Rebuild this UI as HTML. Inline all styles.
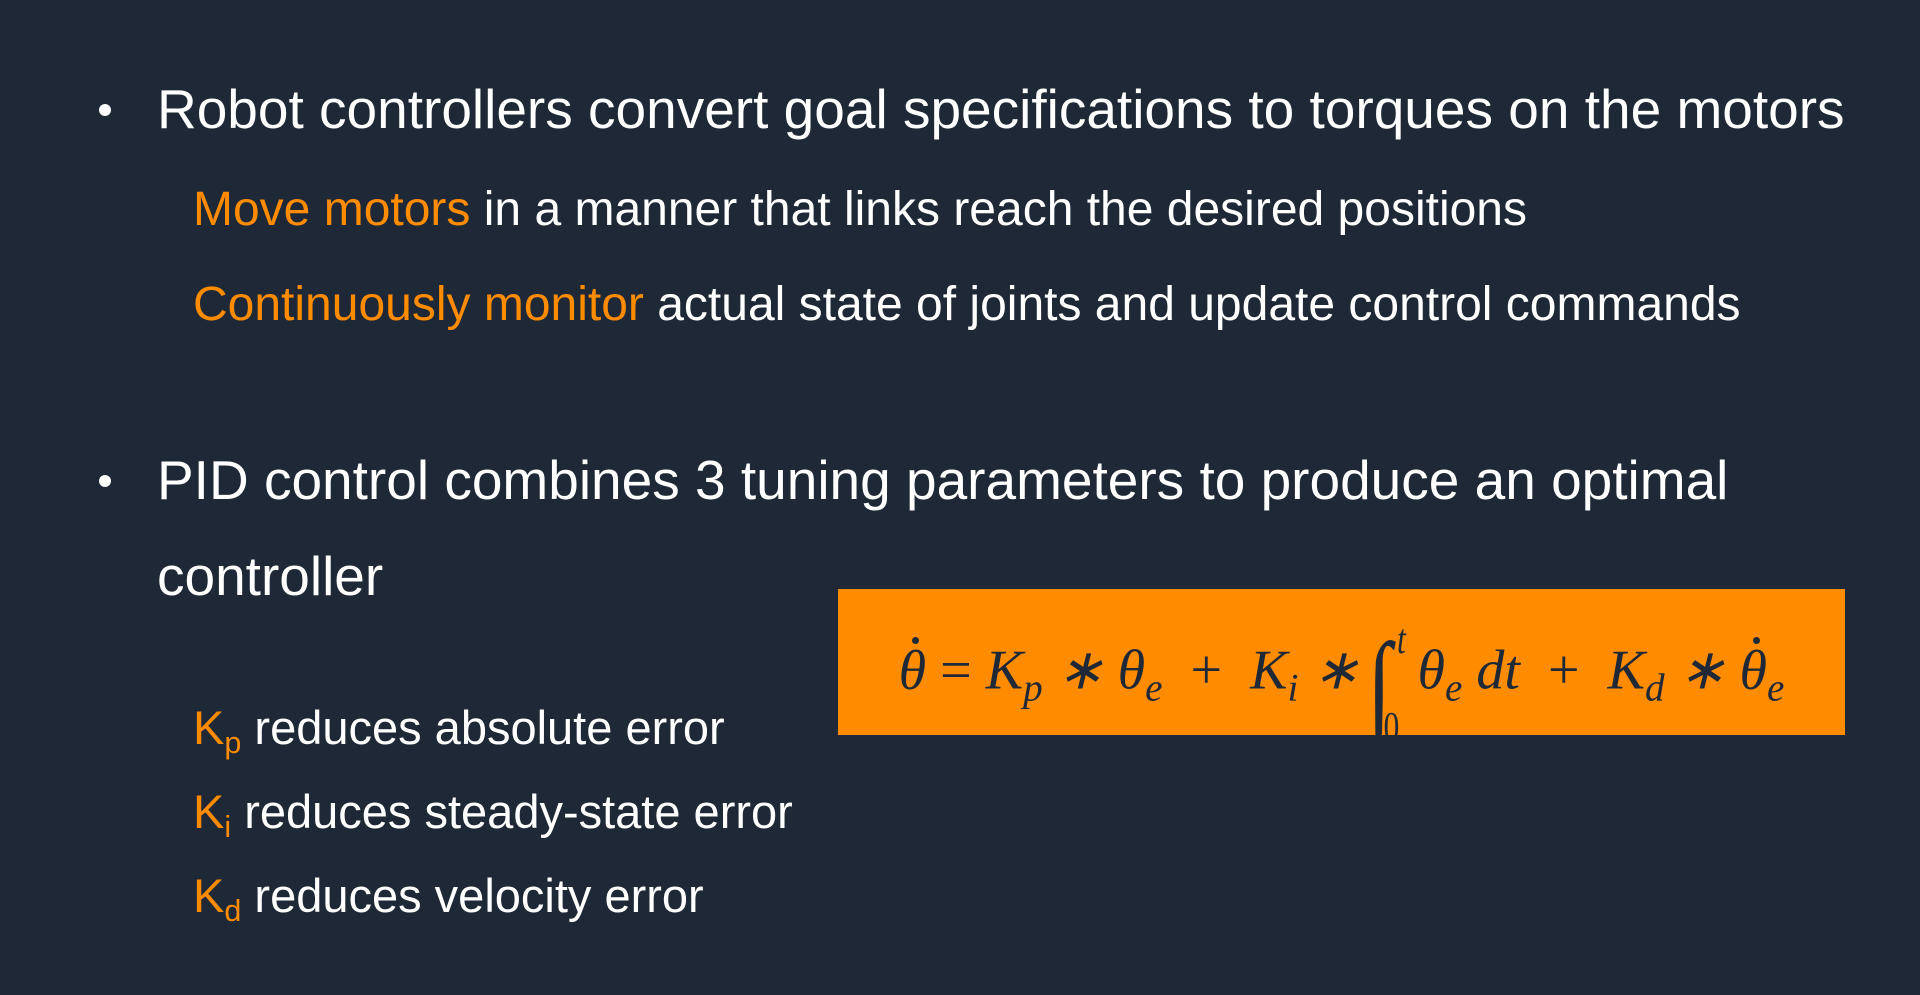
<!DOCTYPE html>
<html><head><meta charset="utf-8"><style>
html,body{margin:0;padding:0}
body{width:1920px;height:995px;background:#1f2836;position:relative;overflow:hidden;font-family:"Liberation Sans",sans-serif;color:#fff}
.t{position:absolute;white-space:nowrap;line-height:1}
.o{color:#ff8c00}
.b{position:absolute;width:12px;height:12px;border-radius:50%;background:#fff}
sub{font-size:0.65em;vertical-align:-0.3em}
.box{position:absolute;left:838px;top:589px;width:1007px;height:146px;background:#ff8c00}
.f{position:absolute;left:0;right:0;top:38px;text-align:center;font-family:"Liberation Serif",serif;font-style:italic;font-size:56px;color:#1f2836;white-space:nowrap;line-height:1}
.f sub{font-size:0.7em}
.d{position:relative;display:inline-block}
.d::after{content:"";position:absolute;left:48%;top:-6px;width:7px;height:7px;border-radius:50%;background:#1f2836}
.int{display:inline-block;position:relative;font-style:normal;font-size:2.1em;line-height:1;vertical-align:-0.3em;margin:0 22px 0 4px;transform:scaleX(0.75)}
.lim{position:absolute;font-size:0.36em;font-style:italic}
</style></head><body>
<div class="b" style="left:99px;top:104px"></div>
<div class="t" style="left:157px;top:82px;font-size:55px">Robot controllers convert goal specifications to torques on the motors</div>
<div class="t" style="left:193px;top:186px;font-size:48px"><span class="o">Move motors</span> in a manner that links reach the desired positions</div>
<div class="t" style="left:193px;top:281px;font-size:48px"><span class="o">Continuously monitor</span> actual state of joints and update control commands</div>
<div class="b" style="left:99px;top:475px"></div>
<div class="t" style="left:157px;top:453px;font-size:55px">PID control combines 3 tuning parameters to produce an optimal</div>
<div class="t" style="left:157px;top:549px;font-size:55px">controller</div>
<div class="t" style="left:193px;top:704px;font-size:47px"><span class="o">K<sub>p</sub></span> reduces absolute error</div>
<div class="t" style="left:193px;top:788px;font-size:47px"><span class="o">K<sub>i</sub></span> reduces steady-state error</div>
<div class="t" style="left:193px;top:872px;font-size:47px"><span class="o">K<sub>d</sub></span> reduces velocity error</div>
<div class="box"><div class="f"><span class="d">θ</span> <span style="font-style:normal">=</span> K<sub>p</sub> ∗ θ<sub>e</sub> &nbsp;<span style="font-style:normal">+</span> &nbsp;K<sub>i</sub> ∗<span class="int">∫<span class="lim" style="left:40px;top:-8px">t</span><span class="lim" style="left:22px;top:80px;font-style:normal">0</span></span>θ<sub>e</sub> dt &nbsp;<span style="font-style:normal">+</span> &nbsp;K<sub>d</sub> ∗ <span class="d">θ</span><sub>e</sub></div></div>
</body></html>
